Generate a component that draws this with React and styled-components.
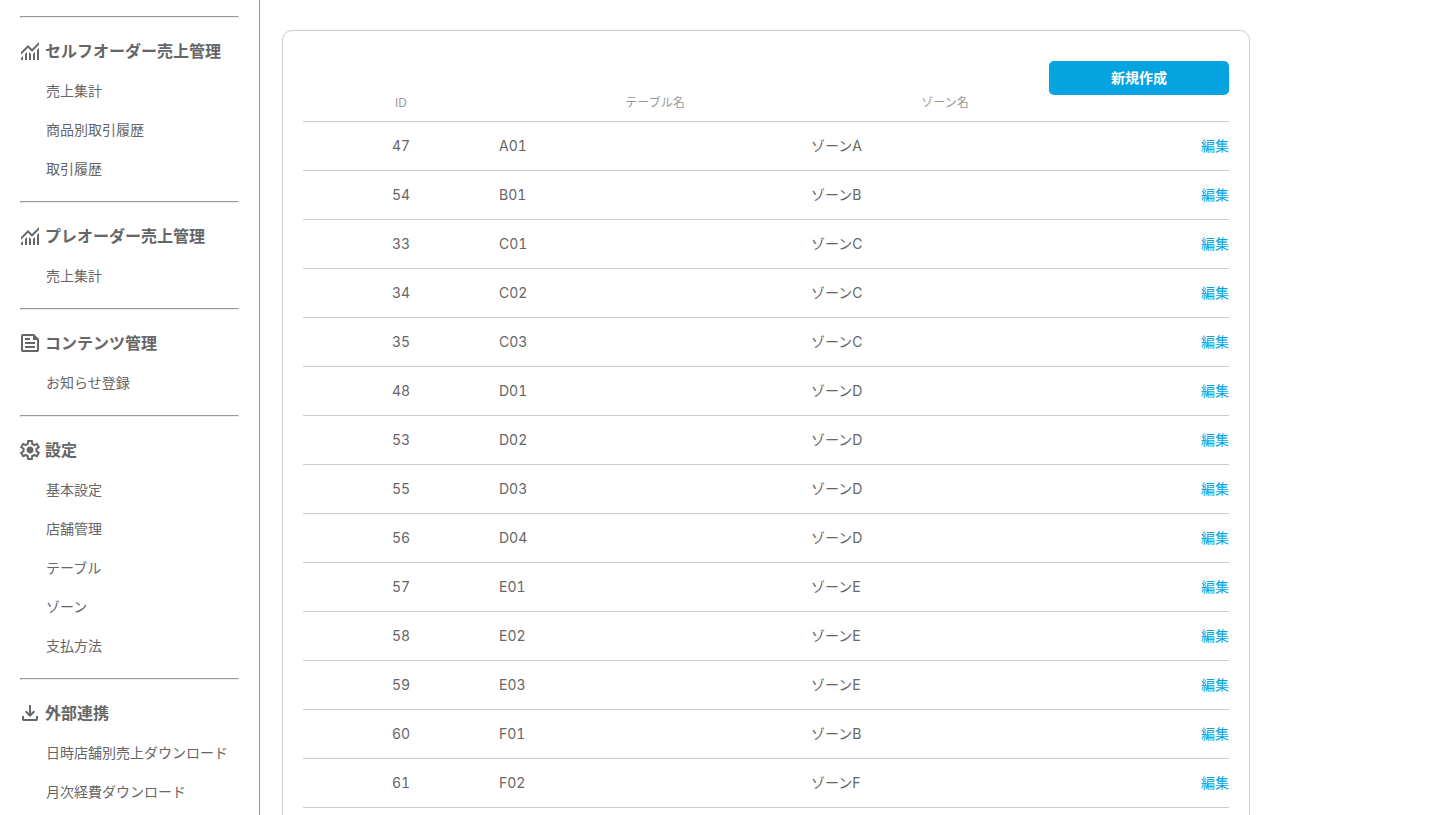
import React from 'react';
import styled, { createGlobalStyle } from 'styled-components';

const GlobalStyle = createGlobalStyle`
  * {
    box-sizing: border-box;
  }

  body {
    margin: 0;
    color: #666;
    background: #fff;
    font-family: Inter, "Noto Sans CJK JP", sans-serif;
    font-size: 14px;
  }
`;

const Page = styled.div`
  display: flex;
  min-height: 100vh;
`;

const Sidebar = styled.nav`
  flex: 0 0 260px;
  padding: 16px 20px;
  border-right: 1px solid #999;
`;

const Divider = styled.hr`
  margin: 0 0 20px;
  border: 1px solid;
  border-color: #999 #eee #eee #999;
`;

const MenuTitle = styled.h2`
  display: flex;
  align-items: center;
  gap: 5px;
  margin: 0 0 7px;
  font-size: 16px;
  font-weight: 700;
  line-height: 26px;
  white-space: nowrap;
`;

const Icon = styled.svg`
  flex: none;
  width: 20px;
  height: 20px;
  fill: currentColor;
`;

const MenuList = styled.ul`
  margin: 0 0 13px;
  padding: 0 0 0 26px;
  list-style: none;
`;

const MenuLink = styled.a`
  display: block;
  color: inherit;
  line-height: 39px;
  text-decoration: none;
  white-space: nowrap;
`;

const Main = styled.main`
  flex: 1;
  min-width: 0;
  padding: 30px 22px;
`;

const Card = styled.section`
  max-width: 968px;
  padding: 30px 20px 20px;
  border: 1px solid #ccc;
  border-radius: 10px;
`;

const Toolbar = styled.div`
  display: flex;
  justify-content: flex-end;
`;

const CreateButton = styled.button`
  width: 180px;
  height: 34px;
  padding: 0 0 2px;
  color: #fff;
  font-family: inherit;
  font-size: 14px;
  font-weight: 700;
  background: #05a3e0;
  border: none;
  border-radius: 5px;
  cursor: pointer;
`;

const Table = styled.table`
  width: 100%;
  table-layout: fixed;
  border-collapse: separate;
  border-spacing: 0;
  font-variant-numeric: tabular-nums;
`;

const HeadCell = styled.th`
  width: ${(props) => props.$width || 'auto'};
  padding: 0 0 11px;
  color: #999;
  font-size: 12px;
  font-weight: 400;
  line-height: 15px;
  text-align: center;
  border-bottom: 1px solid #ccc;
`;

const Cell = styled.td`
  height: 49px;
  padding: 0;
  line-height: 20px;
  text-align: ${(props) => props.$align || 'left'};
  border-bottom: 1px solid #ccc;
`;

const EditLink = styled.a`
  color: #05a3e0;
  text-decoration: none;
`;

const icons = {
  chart:
    'M120-120v-80l80-80v160h-80Zm160 0v-240l80-80v320h-80Zm160 0v-320l80 81v239h-80Zm160 0v-239l80-80v319h-80Zm160 0v-400l80-80v480h-80ZM120-327v-113l280-280 160 160 280-280v113L560-447 400-607 120-327Z',
  feed:
    'M200-120q-33 0-56.5-23.5T120-200v-560q0-33 23.5-56.5T200-840h440l200 200v440q0 33-23.5 56.5T760-120H200Zm0-80h560v-400H600v-160H200v560Zm80-80h400v-80H280v80Zm0-320h200v-80H280v80Zm0 160h400v-80H280v80Z',
  settings:
    'm370-80-16-128q-13-5-24.5-12T307-235l-119 50L78-375l103-78q-1-7-1-13.5v-27q0-6.5 1-13.5L78-585l110-190 119 50q11-8 23-15t24-12l16-128h220l16 128q13 5 24.5 12t22.5 15l119-50 110 190-103 78q1 7 1 13.5v27q0 6.5-2 13.5l103 78-110 190-118-50q-11 8-23 15t-24 12L590-80H370Zm70-80h79l14-106q31-8 57.5-23.5T639-327l99 41 39-68-86-65q5-14 7-29.5t2-31.5q0-16-2-31.5t-7-29.5l86-65-39-68-99 42q-22-23-48.5-38.5T533-694l-13-106h-79l-14 106q-31 8-57.5 23.5T321-633l-99-41-39 68 86 64q-5 15-7 30t-2 32q0 16 2 31t7 30l-86 65 39 68 99-42q22 23 48.5 38.5T427-266l13 106Zm42-180q58 0 99-41t41-99-41-99-99-41q-59 0-99.5 41T342-480t40.5 99 99.5 41Z',
  download:
    'M480-320 280-520l56-58 104 104v-326h80v326l104-104 56 58-200 200ZM240-160q-33 0-56.5-23.5T160-240v-120h80v120h480v-120h80v120q0 33-23.5 56.5T720-160H240Z',
};

const menu = [
  { title: 'セルフオーダー売上管理', icon: 'chart', items: ['売上集計', '商品別取引履歴', '取引履歴'] },
  { title: 'プレオーダー売上管理', icon: 'chart', items: ['売上集計'] },
  { title: 'コンテンツ管理', icon: 'feed', items: ['お知らせ登録'] },
  { title: '設定', icon: 'settings', items: ['基本設定', '店舗管理', 'テーブル', 'ゾーン', '支払方法'] },
  { title: '外部連携', icon: 'download', items: ['日時店舗別売上ダウンロード', '月次経費ダウンロード'] },
];

const tables = [
  { id: 47, name: 'A01', zone: 'ゾーンA' },
  { id: 54, name: 'B01', zone: 'ゾーンB' },
  { id: 33, name: 'C01', zone: 'ゾーンC' },
  { id: 34, name: 'C02', zone: 'ゾーンC' },
  { id: 35, name: 'C03', zone: 'ゾーンC' },
  { id: 48, name: 'D01', zone: 'ゾーンD' },
  { id: 53, name: 'D02', zone: 'ゾーンD' },
  { id: 55, name: 'D03', zone: 'ゾーンD' },
  { id: 56, name: 'D04', zone: 'ゾーンD' },
  { id: 57, name: 'E01', zone: 'ゾーンE' },
  { id: 58, name: 'E02', zone: 'ゾーンE' },
  { id: 59, name: 'E03', zone: 'ゾーンE' },
  { id: 60, name: 'F01', zone: 'ゾーンB' },
  { id: 61, name: 'F02', zone: 'ゾーンF' },
];

const App = () => {
  return (
    <>
      <GlobalStyle />
      <Page>
        <Sidebar>
          {menu.map((group) => (
            <div key={group.title}>
              <Divider />
              <MenuTitle>
                <Icon viewBox="80 -880 800 800" aria-hidden="true">
                  <path d={icons[group.icon]} />
                </Icon>
                {group.title}
              </MenuTitle>
              <MenuList>
                {group.items.map((item) => (
                  <li key={item}>
                    <MenuLink href="#">{item}</MenuLink>
                  </li>
                ))}
              </MenuList>
            </div>
          ))}
        </Sidebar>
        <Main>
          <Card>
            <Toolbar>
              <CreateButton type="button">新規作成</CreateButton>
            </Toolbar>
            <Table>
              <thead>
                <tr>
                  <HeadCell $width="196px">ID</HeadCell>
                  <HeadCell>テーブル名</HeadCell>
                  <HeadCell $width="268px">ゾーン名</HeadCell>
                  <HeadCell $width="150px" />
                </tr>
              </thead>
              <tbody>
                {tables.map((row) => (
                  <tr key={row.id}>
                    <Cell $align="center">{row.id}</Cell>
                    <Cell>{row.name}</Cell>
                    <Cell>{row.zone}</Cell>
                    <Cell $align="right">
                      <EditLink href="#">編集</EditLink>
                    </Cell>
                  </tr>
                ))}
              </tbody>
            </Table>
          </Card>
        </Main>
      </Page>
    </>
  );
};

export default App;
